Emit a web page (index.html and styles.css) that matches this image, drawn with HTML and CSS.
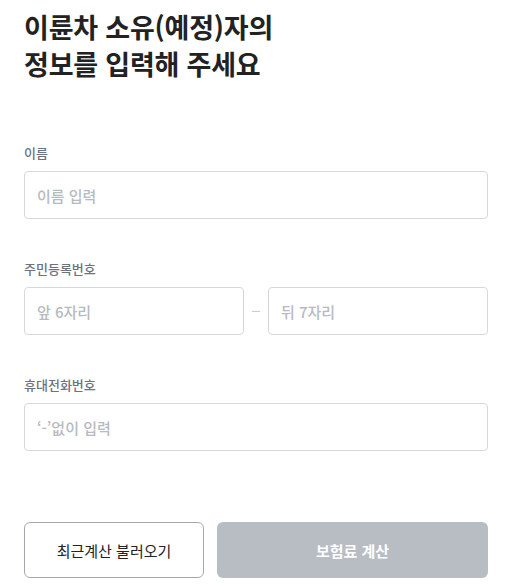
FILE: index.html
```html
<!DOCTYPE html>
<html lang="ko">
<head>
<meta charset="utf-8">
<link rel="stylesheet" href="styles.css">
</head>
<body>
<div class="page">
  <h1 class="title">이륜차 소유(예정)자의<br>정보를 입력해 주세요</h1>
  <div class="form">
    <div class="field">
      <label class="label">이름</label>
      <div class="input"><span class="ph">이름 입력</span></div>
    </div>
    <div class="field">
      <label class="label">주민등록번호</label>
      <div class="split">
        <div class="input grow"><span class="ph">앞 6자리</span></div>
        <span class="dash"></span>
        <div class="input grow"><span class="ph">뒤 7자리</span></div>
      </div>
    </div>
    <div class="field">
      <label class="label">휴대전화번호</label>
      <div class="input"><span class="ph">‘-’없이 입력</span></div>
    </div>
  </div>
  <div class="actions">
    <button class="btn btn-outline">최근계산 불러오기</button>
    <button class="btn btn-primary">보험료 계산</button>
  </div>
</div>
</body>
</html>
```
FILE: styles.css
```css
* { box-sizing: border-box; }
html, body { margin: 0; padding: 0; background: #fff; }
body {
  font-family: "Noto Sans CJK KR", "Noto Sans", sans-serif;
  color: #222;
}
.page {
  width: 464px;
  margin-left: 24px;
  padding-top: 8px;
}
.title {
  margin: 0;
  font-size: 27px;
  line-height: 37px;
  font-weight: 700;
  color: #222;
  letter-spacing: -0.2px;
}
.form {
  margin-top: 62px;
  display: flex;
  flex-direction: column;
  gap: 41px;
}
.field {
  display: flex;
  flex-direction: column;
  gap: 9px;
}
.label {
  font-size: 13px;
  line-height: 18px;
  font-weight: 500;
  color: #6b7280;
}
.input {
  height: 48px;
  flex: none;
  border: 1px solid #d5d8dd;
  border-radius: 4px;
  display: flex;
  align-items: center;
  padding-left: 12px;
}
.input.grow { flex: 1; }
.ph {
  font-size: 15px;
  font-weight: 500;
  color: #b6bac1;
}
.split {
  display: flex;
  align-items: center;
}
.dash {
  width: 8px;
  height: 1px;
  background: #c8ccd2;
  margin: 0 8px;
}
.actions {
  margin-top: 71px;
  display: flex;
  gap: 13px;
}
.btn {
  height: 56px;
  border-radius: 6px;
  font-family: inherit;
  font-size: 15px;
  padding: 0;
}
.btn-outline {
  width: 180px;
  background: #fff;
  border: 1px solid #a3a8b0;
  color: #222;
  font-weight: 400;
}
.btn-primary {
  flex: 1;
  background: #b8bdc4;
  border: none;
  color: #fff;
  font-weight: 700;
}
```
